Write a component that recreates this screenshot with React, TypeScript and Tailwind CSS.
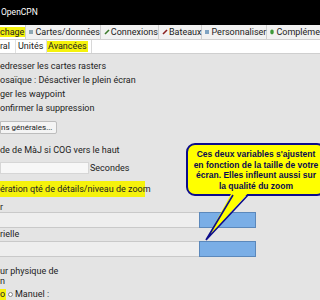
import React from "react";

function Tab({ w, children, sel }: { w: string; children: React.ReactNode; sel?: boolean }) {
  return (
    <div className={`${w} h-full flex items-center border-r border-[#cfcfcf] ${sel ? "bg-white" : ""}`}>{children}</div>
  );
}

function Icon({ c, shape }: { c: string; shape: "sq" | "pen" | "leaf" }) {
  if (shape === "sq")
    return <span className="inline-block w-[4px] h-[4px] mr-[2px] ml-[3px]" style={{ background: c }} />;
  if (shape === "pen")
    return (
      <svg width="6" height="6" viewBox="0 0 6 6" className="mr-[1px] ml-[3px]">
        <path d="M1 5 L5 1" stroke={c} strokeWidth="1.6" />
      </svg>
    );
  return (
    <svg width="6" height="6" viewBox="0 0 6 6" className="mr-[1px] ml-[2px]">
      <ellipse cx="3" cy="3" rx="1.8" ry="2.4" fill={c} />
    </svg>
  );
}

export default function App() {
  return (
    <div className="relative w-[320px] h-[300px] overflow-hidden bg-[#e4e4e4] font-['Roboto',sans-serif] text-[#222] text-[9px] leading-none">
      {/* title bar */}
      <div className="h-[25px] bg-black text-white flex items-center pl-[1px] text-[8.5px] pb-[1px]">OpenCPN</div>
      {/* tabs row 1 */}
      <div className="h-[15px] bg-[#f1f1f1] border-b border-[#d0d0d0] flex whitespace-nowrap text-[9px]">
        <Tab w="w-[27px]" sel>
          <span className="bg-[#f5f20c] h-[10px] flex items-center pr-[1px]">chage</span>
        </Tab>
        <Tab w="w-[77px]">
          <Icon c="#8fa9b5" shape="sq" />
          Cartes/données
        </Tab>
        <Tab w="w-[59px]">
          <Icon c="#3a7a2a" shape="pen" />
          Connexions
        </Tab>
        <Tab w="w-[46px]">
          <Icon c="#8a2020" shape="pen" />
          Bateaux
        </Tab>
        <Tab w="w-[66px]">
          <Icon c="#7fa3c2" shape="sq" />
          Personnaliser
        </Tab>
        <div className="flex-1 h-full flex items-center">
          <Icon c="#3f9a3a" shape="leaf" />
          Compléments
        </div>
      </div>
      {/* tabs row 2 */}
      <div className="h-[14px] bg-white border-b border-[#cfcfcf] flex whitespace-nowrap">
        <div className="w-[16px] h-full flex items-center border-r border-[#e0e0e0]">ral</div>
        <div className="w-[31px] h-full flex items-center pl-[2px] border-r border-[#e0e0e0]">Unités</div>
        <div className="w-[45px] h-full flex items-center border-r border-[#d8d8d8]">
          <span className="bg-[#f5f20c] h-[11px] flex items-center px-[1px]">Avancées</span>
        </div>
      </div>
      {/* content */}
      <div className="flex flex-col whitespace-nowrap">
        <div className="h-[14px] mt-[5px] flex items-center">edresser les cartes rasters</div>
        <div className="h-[14px] flex items-center">osaïque : Désactiver le plein écran</div>
        <div className="h-[14px] flex items-center">ger les waypoint</div>
        <div className="h-[14px] flex items-center">onfirmer la suppression</div>
        <div className="mt-[6px] h-[13px] w-[57px] bg-[#f4f4f4] border border-[#bdbdbd] rounded-r-[2px] flex items-center text-[8px]">
          ns générales...
        </div>
        <div className="mt-[9px] h-[14px] flex items-center">de de MàJ si COG vers le haut</div>
        <div className="mt-[5px] h-[12px] flex items-center">
          <div className="w-[89px] h-full bg-[#f7f7f7] border border-[#d6d6d6]" />
          <span className="ml-[1px]">Secondes</span>
        </div>
        <div className="mt-[7px] h-[16px] flex">
          <span className="bg-[#f5f20c] w-[145px] flex items-center">ération qté de détails/niveau de zoom</span>
        </div>
        <div className="mt-[5px] h-[10px] flex items-center">r</div>
        <div className="h-[16px] w-[256px] flex">
          <div className="flex-1 bg-[#eeeeee] border-y border-[#c9c9c9]" />
          <div className="w-[57px] bg-[#7aaee6] border border-[#5b88bb]" />
        </div>
        <div className="h-[13px] flex items-center">rielle</div>
        <div className="h-[16px] w-[256px] flex">
          <div className="flex-1 bg-[#eeeeee] border-y border-[#c9c9c9]" />
          <div className="w-[57px] bg-[#7aaee6] border border-[#5b88bb]" />
        </div>
        <div className="mt-[10px] leading-[9.5px]">
          ur physique de
          <br />n
        </div>
        <div className="mt-[3px] h-[11px] flex items-center">
          <span className="bg-[#f5f20c] h-full w-[6px] flex items-center">o</span>
          <span className="ml-[2px] w-[5px] h-[5px] rounded-full border border-[#888] bg-white" />
          <span className="ml-[2px]">Manuel :</span>
        </div>
      </div>
      {/* callout */}
      <div className="absolute left-[186px] top-[143px] w-[140px] h-[53px] bg-[#ffff00] border-2 border-[#0c0c8c] rounded-[9px] pt-[4px] text-center font-['Liberation_Sans',sans-serif] font-bold text-[8.5px] leading-[10.5px] text-[#0a0a50] whitespace-nowrap">
        Ces deux variables s'ajustent
        <br />
        en fonction de la taille de votre
        <br />
        écran. Elles infleunt aussi sur
        <br />
        la qualité du zoom
      </div>
      <svg className="absolute left-0 top-0" width="320" height="300" viewBox="0 0 320 300">
        <polygon points="232,192 249,192 206,240" fill="#ffff00" />
        <polyline points="233,195 206,240 248,195" fill="none" stroke="#0c0c8c" strokeWidth="1.6" />
      </svg>
    </div>
  );
}
